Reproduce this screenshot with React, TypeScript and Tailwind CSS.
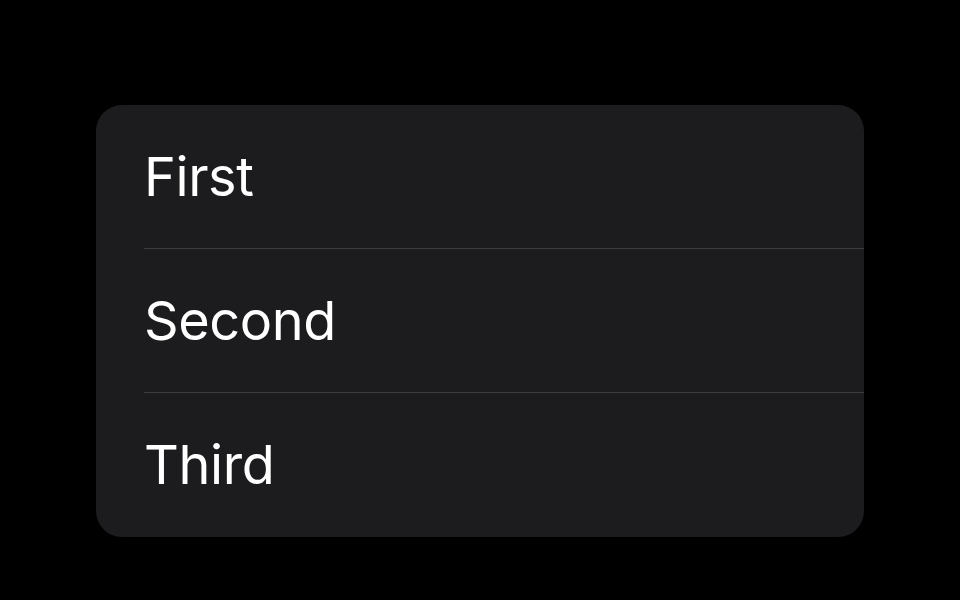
const items = ["First", "Second", "Third"];

export default function App() {
  return (
    <div
      className="flex h-[600px] w-[960px] items-start justify-center bg-black pt-[105px]"
      style={{ fontFamily: "Inter, 'Noto Sans', sans-serif" }}
    >
      <div className="w-[768px] overflow-hidden rounded-[26px] bg-[#1c1c1e] pb-px">
        {items.map((label, i) => (
          <div key={label} className="pl-[48px]">
            {i > 0 ? <div className="h-px bg-[#3d3d40]" /> : null}
            <div className="flex h-[143px] items-center text-[54px] leading-none tracking-[-0.4px] text-white">
              {label}
            </div>
          </div>
        ))}
      </div>
    </div>
  );
}
